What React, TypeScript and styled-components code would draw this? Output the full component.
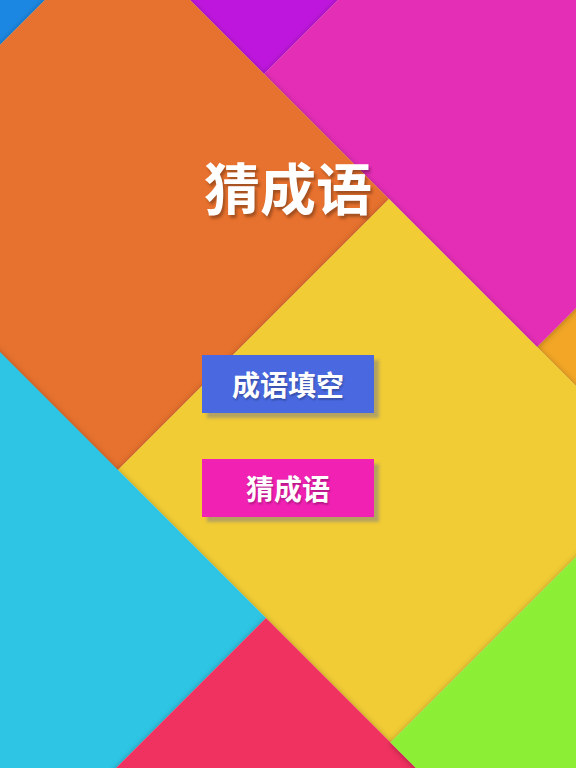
import React from "react";
import styled, { createGlobalStyle } from "styled-components";

const GlobalStyle = createGlobalStyle`
  html, body {
    margin: 0;
    padding: 0;
  }
  body {
    font-family: "Noto Sans CJK SC", "Noto Sans", sans-serif;
  }
`;

const Page = styled.div`
  position: relative;
  width: 576px;
  height: 768px;
  overflow: hidden;
`;

const Backdrop = styled.svg`
  position: absolute;
  inset: 0;
  width: 576px;
  height: 768px;
  display: block;
`;

const Content = styled.main`
  position: relative;
  display: flex;
  flex-direction: column;
  align-items: center;
  padding-top: 158px;
`;

const Title = styled.h1`
  margin: 0;
  font-family: "Noto Sans CJK SC", sans-serif;
  font-size: 56px;
  line-height: 56px;
  font-weight: 700;
  color: #ffffff;
  text-shadow: 2px 3px 3px rgba(0, 0, 0, 0.3);
  letter-spacing: 0;
`;

const Menu = styled.nav`
  display: flex;
  flex-direction: column;
  align-items: center;
  gap: 46px;
  margin-top: 141px;
`;

const MenuButton = styled.button<{ $bg: string }>`
  width: 172px;
  height: 58px;
  border: none;
  border-radius: 0;
  padding: 0;
  background: ${(p) => p.$bg};
  box-shadow: 5px 5px 3px rgba(130, 130, 130, 0.55);
  color: #ffffff;
  font-family: "Noto Sans CJK SC", sans-serif;
  font-size: 28px;
  font-weight: 700;
  line-height: 58px;
  text-shadow: 1px 2px 2px rgba(0, 0, 0, 0.25);
  cursor: pointer;
`;

type Tile = { color: string; u: [number, number]; v: [number, number] };

const tiles: Tile[] = [
  { color: "#F3A626", u: [884, 1430], v: [190, 733] },
  { color: "#BF17DE", u: [-210, 338], v: [190, 733] },
  { color: "#E42DB6", u: [338, 884], v: [190, 733] },
  { color: "#1A87E2", u: [-500, 45], v: [-353, 190] },
  { color: "#E7712F", u: [45, 588], v: [-353, 190] },
  { color: "#F1CC35", u: [588, 1133], v: [-352, 190] },
  { color: "#2EC5E5", u: [340, 884], v: [-896, -352] },
  { color: "#EF335E", u: [884, 1430], v: [-896, -352] },
  { color: "#8CEF36", u: [1133, 1680], v: [-352, 190] },
];

const pts = (t: Tile) => {
  const corners: [number, number][] = [
    [t.u[0], t.v[0]],
    [t.u[0], t.v[1]],
    [t.u[1], t.v[1]],
    [t.u[1], t.v[0]],
  ];
  return corners
    .map(([u, v]) => `${(u + v) / 2},${(u - v) / 2}`)
    .join(" ");
};

const Background = () => (
  <Backdrop viewBox="0 0 576 768" aria-hidden="true">
    <defs>
      <filter id="tileShadow" x="-20%" y="-20%" width="140%" height="140%">
        <feDropShadow dx="0" dy="1" stdDeviation="3" floodColor="#000" floodOpacity="0.3" />
      </filter>
    </defs>
    {tiles.map((t, i) => (
      <polygon key={i} points={pts(t)} fill={t.color} filter="url(#tileShadow)" />
    ))}
  </Backdrop>
);

export default function App() {
  return (
    <>
      <GlobalStyle />
      <Page>
        <Background />
        <Content>
          <Title>猜成语</Title>
          <Menu>
            <MenuButton $bg="#4A69E1">成语填空</MenuButton>
            <MenuButton $bg="#F021B3">猜成语</MenuButton>
          </Menu>
        </Content>
      </Page>
    </>
  );
}
